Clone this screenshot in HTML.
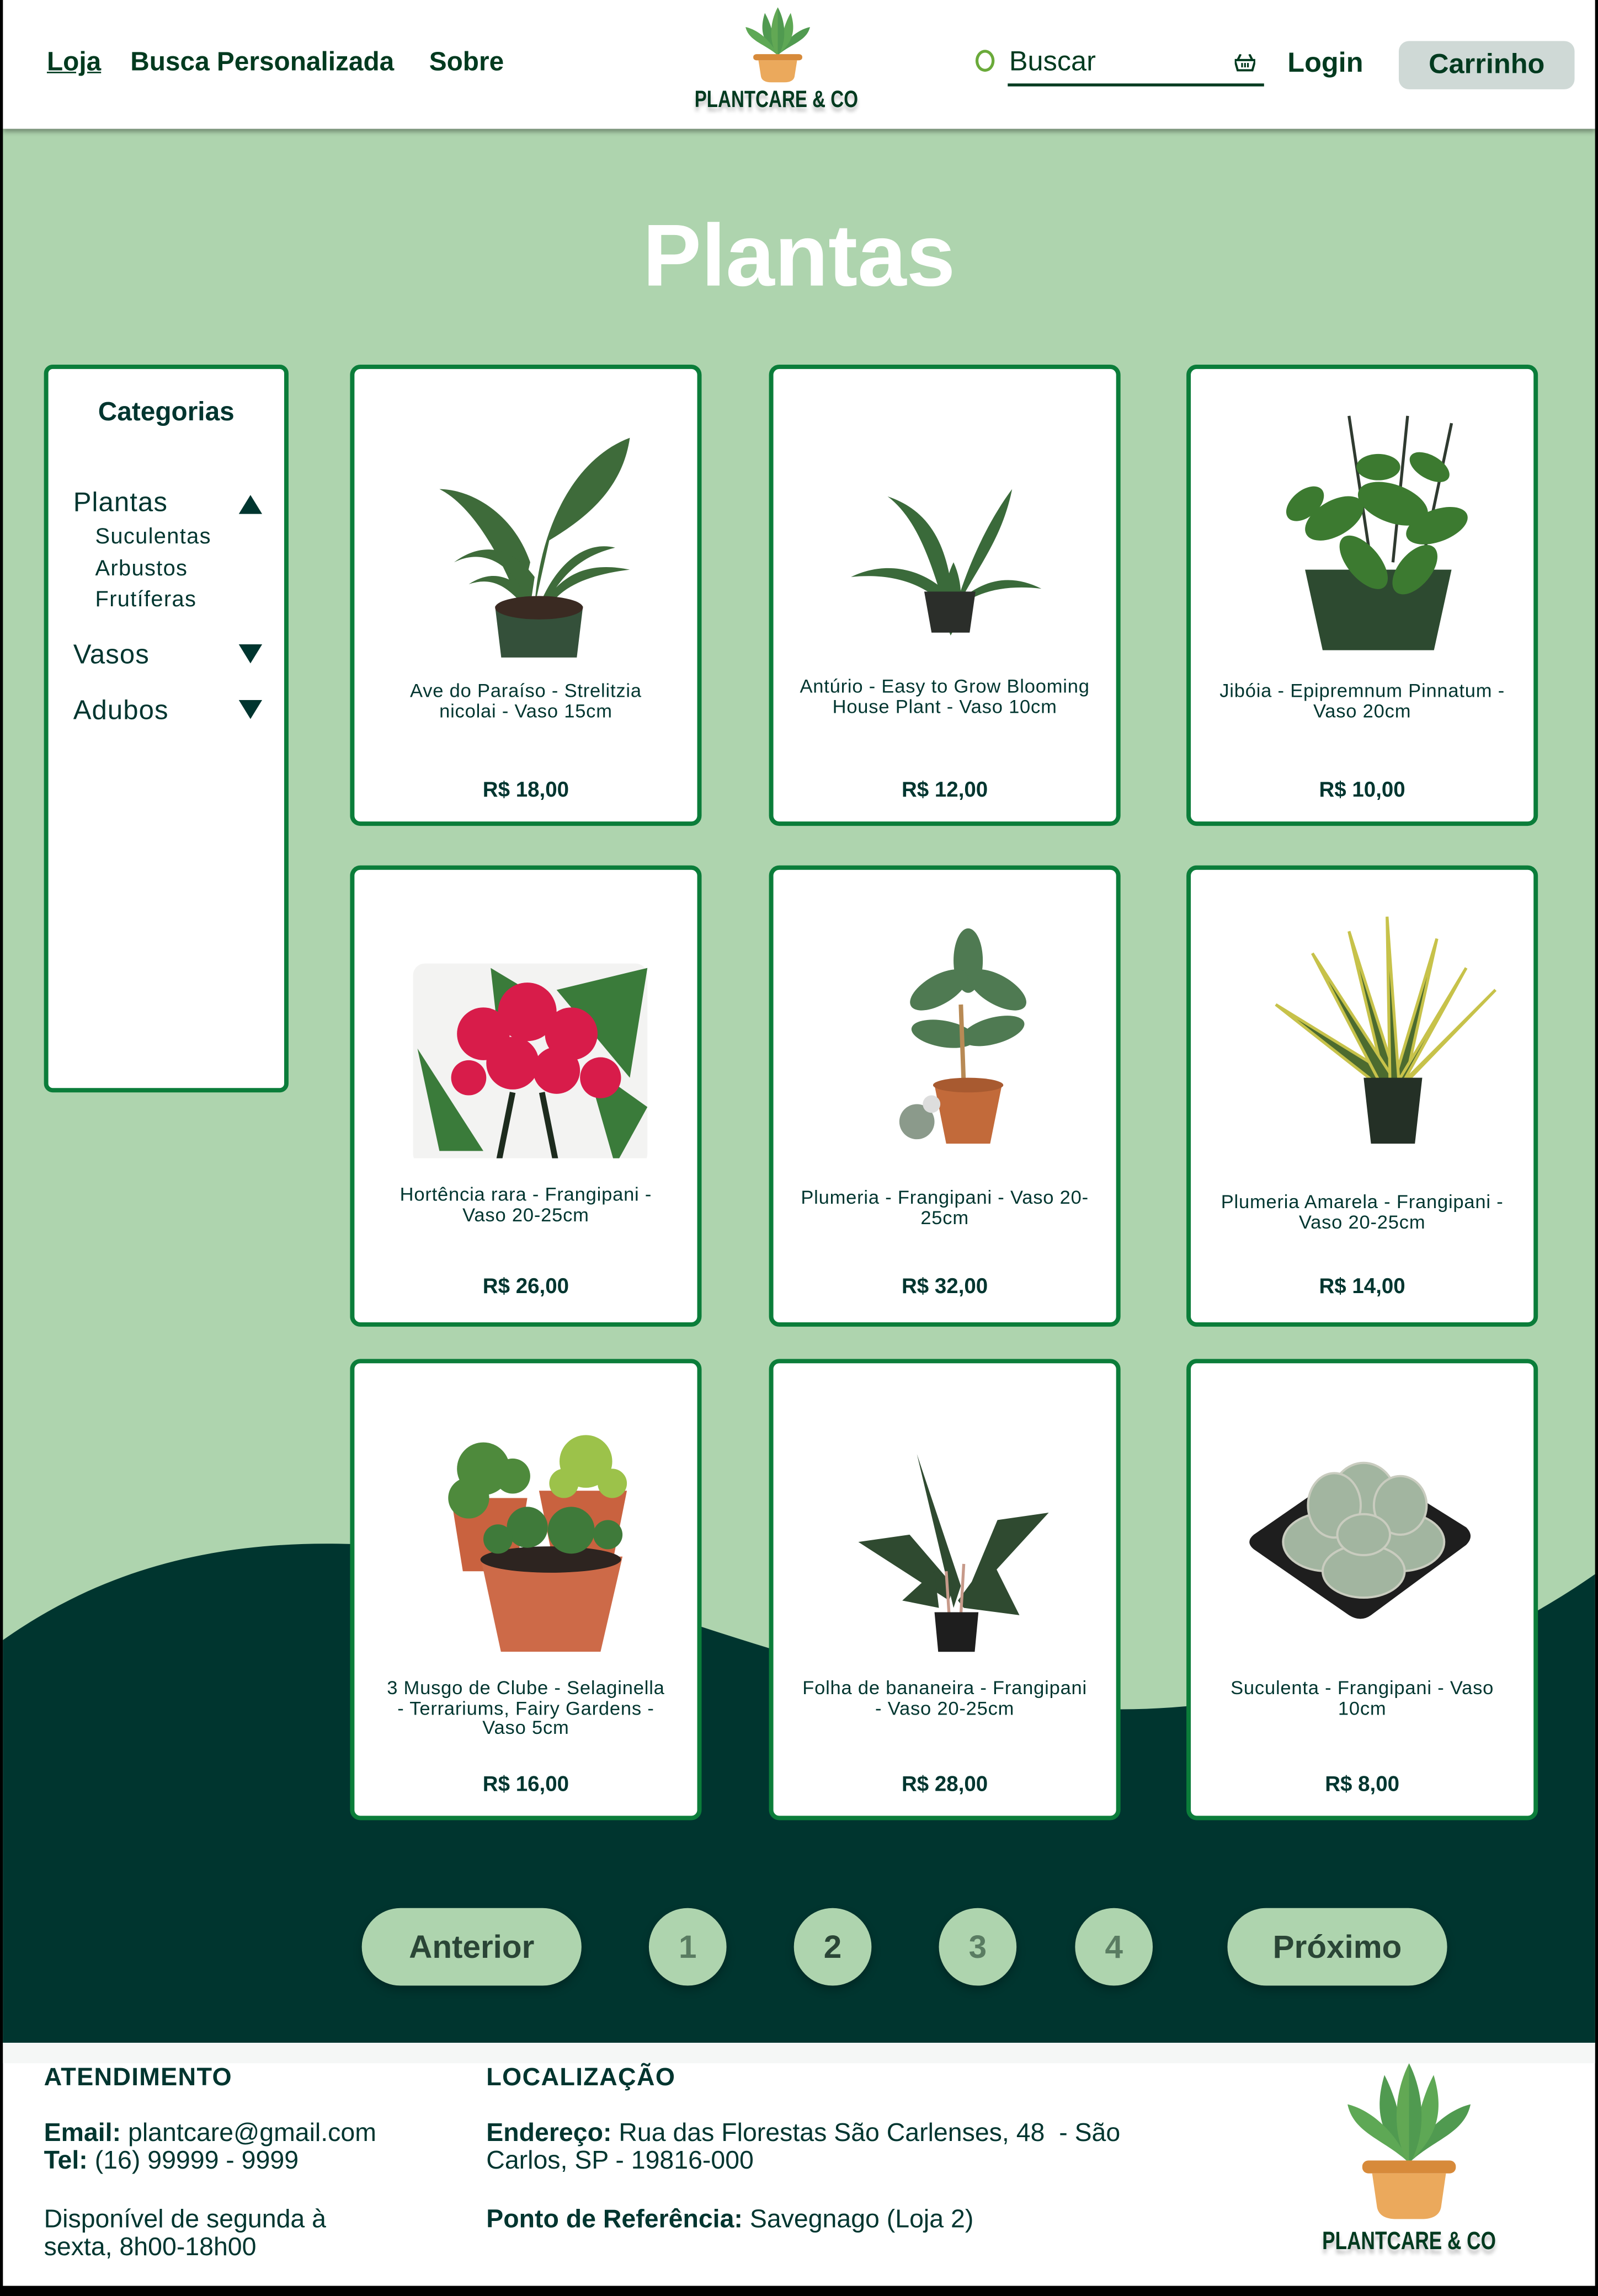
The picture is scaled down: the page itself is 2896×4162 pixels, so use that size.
<!DOCTYPE html>
<html><head><meta charset="utf-8">
<style>
html,body{margin:0;padding:0;background:#000;}
body{width:2896px;height:4162px;overflow:hidden;position:relative;}
#w{position:absolute;left:0;top:0;width:1091px;height:1568px;transform:scale(2.65445);transform-origin:0 0;font-family:"Liberation Sans",sans-serif;color:#00352f;overflow:hidden;background:#000;}
.abs{position:absolute;}
#hdr{left:2px;top:0;width:1087px;height:88px;background:#fff;box-shadow:0 2px 3px rgba(0,0,0,.35);z-index:3;}
.nav{position:absolute;top:32px;font-size:18px;font-weight:bold;color:#003a1f;}
#main{left:2px;top:88px;width:1087px;height:1308px;background:#aed4ae;}
.card{position:absolute;width:240px;height:315px;background:#fff;border:3px solid #0b7d3a;border-radius:7px;box-sizing:border-box;}
.card svg{position:absolute;left:38px;top:22px;}
.card .t{position:absolute;left:18px;right:18px;text-align:center;font-size:13px;line-height:13.5px;letter-spacing:.3px;color:#00352f;}
.card .p{position:absolute;left:0;right:0;top:280px;text-align:center;font-size:14.5px;font-weight:bold;color:#00352f;}
.pg{position:absolute;top:1303px;height:53px;background:#aed4ae;border-radius:27px;text-align:center;line-height:53px;font-size:22px;font-weight:bold;color:#2a4536;box-shadow:0 3px 6px rgba(0,0,0,.25);}
#foot{left:2px;top:1395px;width:1087px;height:166px;background:#fff;}
.fh{position:absolute;font-size:17px;font-weight:bold;letter-spacing:.5px;}
.ft{position:absolute;font-size:17.5px;line-height:19px;}
.logo{font-family:"Liberation Sans Narrow","Liberation Sans",sans-serif;font-weight:bold;color:#003a1f;text-shadow:0 3px 3px rgba(0,0,0,.25);white-space:nowrap;transform-origin:50% 50%;}
</style></head><body><div id="w">
<div class="abs" id="main"></div>
<svg class="abs" style="left:0;top:0" width="1091" height="1568"><path d="M2 1120 C80 1065 170 1045 290 1058 C420 1075 600 1180 800 1166 C930 1156 1010 1130 1089 1075 L1089 1396 L2 1396Z" fill="#00352f"/></svg>
<div class="abs" id="hdr">
<div class="nav" style="left:30px;text-decoration:underline;">Loja</div>
<div class="nav" style="left:87px">Busca Personalizada</div>
<div class="nav" style="left:291px">Sobre</div>
<svg class="abs" style="left:507px;top:5px" width="44" height="52" viewBox="0 -5 100 135" preserveAspectRatio="none">
<path d="M50 80 C30 60 20 40 30 5 C40 25 45 50 50 80Z" fill="#509a50"/>
<path d="M50 80 C30 60 5 55 0 30 C20 35 40 55 50 80Z" fill="#5ea855"/>
<path d="M50 80 C70 60 95 55 100 30 C80 35 60 55 50 80Z" fill="#509a50"/>
<path d="M50 80 C70 60 80 40 70 5 C60 25 55 50 50 80Z" fill="#5ea855"/>
<path d="M50 82 C35 55 38 20 50 -5 C62 20 65 55 50 82Z" fill="#62a854"/>
<path d="M50 82 L50 -5 C62 20 65 55 50 82Z" fill="#509a50"/>
<rect x="12" y="78" width="76" height="11" rx="5" fill="#d78a3a"/>
<path d="M20 89 L80 89 L76 118 Q74 128 60 128 L40 128 Q26 128 24 118Z" fill="#eba95c"/>
</svg>
<div class="abs logo" style="left:428px;top:60px;width:200px;text-align:center;font-size:16px;transform:scaleX(.78)">PLANTCARE &amp; CO</div>
<div class="abs" style="left:664px;top:34px;width:13px;height:15px;border:2px solid #6aaa3a;border-radius:50%;box-sizing:border-box"></div>
<div class="abs" style="left:687px;top:32px;font-size:19px;color:#003a1f">Buscar</div>
<div class="abs" style="left:686px;top:57px;width:175px;height:2px;background:#003a1f"></div>
<svg class="abs" style="left:841px;top:37px" width="14" height="12" viewBox="0 0 14 12"><path d="M4 0 L2 4 M10 0 L12 4" stroke="#003a1f" stroke-width="1.5"/><path d="M0 4 H14 L12 11 H2Z" fill="none" stroke="#003a1f" stroke-width="1.5"/><path d="M5 6v3M7 6v3M9 6v3" stroke="#003a1f" stroke-width="1.2"/></svg>
<div class="nav" style="left:877px;top:33px;font-size:19px">Login</div>
<div class="abs" style="left:953px;top:28px;width:120px;height:33px;background:#cfd9d6;border-radius:7px;text-align:center;line-height:33px;font-size:19px;font-weight:bold;color:#003a1f">Carrinho</div>
</div>
<div class="abs" style="left:0;width:1091px;top:140px;text-align:center;font-size:60px;font-weight:bold;color:#fff;">Plantas</div>
<div class="abs" style="left:30px;top:249px;width:167px;height:497px;background:#fff;border:3px solid #0b7d3a;border-radius:6px;box-sizing:border-box">
<div class="abs" style="left:0;right:0;top:19px;text-align:center;font-size:18px;font-weight:bold">Categorias</div>
<div class="abs" style="left:17px;top:80px;font-size:18.5px;letter-spacing:.4px">Plantas</div>
<div class="abs" style="left:32px;top:104px;font-size:15px;line-height:21.5px;letter-spacing:.5px">Suculentas<br>Arbustos<br>Frutíferas</div>
<div class="abs" style="left:17px;top:184px;font-size:18.5px;letter-spacing:.4px">Vasos</div>
<div class="abs" style="left:17px;top:222px;font-size:18.5px;letter-spacing:.4px">Adubos</div>
<svg class="abs" style="left:130px;top:86px" width="16" height="13"><path d="M0 13 L8 0 L16 13Z" fill="#00352f"/></svg>
<svg class="abs" style="left:130px;top:188px" width="16" height="13"><path d="M0 0 L8 13 L16 0Z" fill="#00352f"/></svg>
<svg class="abs" style="left:130px;top:226px" width="16" height="13"><path d="M0 0 L8 13 L16 0Z" fill="#00352f"/></svg>
</div>

<!-- Row 1 -->
<div class="card" style="left:239px;top:249px">
<svg width="160" height="175" viewBox="0 0 160 175"><g fill="#3e6b3a"><path d="M85 140 C88 90 110 40 150 25 C145 60 120 80 95 95Z"/><path d="M75 140 C60 100 40 70 20 60 C40 60 70 75 82 110Z"/><path d="M82 140 C70 110 50 100 30 110 C50 95 70 100 85 120Z"/><path d="M88 140 C100 110 120 95 140 100 C120 105 105 115 92 140Z"/><path d="M90 140 C105 115 125 110 150 115 C125 118 105 125 95 140Z"/><path d="M78 140 C65 125 55 120 40 125 C55 115 70 118 82 135Z"/></g><path d="M58 140 H118 L112 190 H64Z" fill="#34503a"/><ellipse cx="88" cy="141" rx="30" ry="8" fill="#3a2a22"/></svg>
<div class="t" style="top:213px">Ave do Paraíso - Strelitzia nicolai - Vaso 15cm</div><div class="p">R$ 18,00</div></div>
<div class="card" style="left:525px;top:249px">
<svg width="160" height="175" viewBox="0 0 160 175"><g fill="#3a6a3a"><path d="M80 145 C70 110 60 80 40 65 C70 75 82 100 85 140Z"/><path d="M85 145 C95 110 110 80 125 60 C118 95 100 115 88 140Z"/><path d="M80 140 C60 120 35 118 15 120 C40 108 65 115 82 132Z"/><path d="M85 140 C105 120 125 118 145 128 C120 125 100 130 87 142Z"/><path d="M83 160 C75 140 80 120 85 110 C92 125 92 145 83 160Z"/></g><path d="M65 130 H100 L96 158 H70Z" fill="#2b2e2a"/></svg>
<div class="t" style="top:210px">Antúrio - Easy to Grow Blooming House Plant - Vaso 10cm</div><div class="p">R$ 12,00</div></div>
<div class="card" style="left:810px;top:249px">
<svg width="160" height="175" viewBox="0 0 160 175"><path d="M70 10 L85 110 M110 10 L100 110 M140 15 L120 110" stroke="#2f3a30" stroke-width="2"/><path d="M40 115 H140 L128 170 H52Z" fill="#2d4a30"/><g fill="#3c7a30"><ellipse cx="60" cy="80" rx="22" ry="12" transform="rotate(-30 60 80)"/><ellipse cx="100" cy="70" rx="25" ry="13" transform="rotate(20 100 70)"/><ellipse cx="130" cy="85" rx="22" ry="11" transform="rotate(-20 130 85)"/><ellipse cx="80" cy="110" rx="22" ry="11" transform="rotate(50 80 110)"/><ellipse cx="115" cy="115" rx="20" ry="11" transform="rotate(-50 115 115)"/><ellipse cx="40" cy="70" rx="15" ry="9" transform="rotate(-40 40 70)"/><ellipse cx="90" cy="45" rx="15" ry="9"/><ellipse cx="125" cy="45" rx="15" ry="8" transform="rotate(30 125 45)"/></g></svg>
<div class="t" style="top:213px">Jibóia - Epipremnum Pinnatum - Vaso 20cm</div><div class="p">R$ 10,00</div></div>

<!-- Row 2 -->
<div class="card" style="left:239px;top:591px">
<svg width="165" height="175" viewBox="0 0 165 175"><rect x="2" y="42" width="160" height="138" rx="8" fill="#f3f3f2"/><g fill="#3a7b3a"><path d="M5 100 L50 170 L20 170Z"/><path d="M100 60 L162 45 L150 120Z"/><path d="M55 45 L80 60 L60 90Z"/><path d="M120 110 L162 140 L140 180Z"/></g><g fill="#d81c4a"><circle cx="50" cy="90" r="18"/><circle cx="80" cy="75" r="20"/><circle cx="110" cy="90" r="18"/><circle cx="70" cy="110" r="18"/><circle cx="100" cy="115" r="16"/><circle cx="130" cy="120" r="14"/><circle cx="40" cy="120" r="12"/></g><path d="M70 130 L60 180 M90 130 L100 180" stroke="#1d2b1e" stroke-width="4"/></svg>
<div class="t" style="top:215px">Hortência rara - Frangipani - Vaso 20-25cm</div><div class="p" style="top:277px">R$ 26,00</div></div>
<div class="card" style="left:525px;top:591px">
<svg width="160" height="175" viewBox="0 0 160 175"><g fill="#4f7a52"><ellipse cx="95" cy="40" rx="10" ry="22"/><ellipse cx="75" cy="60" rx="22" ry="10" transform="rotate(-30 75 60)"/><ellipse cx="115" cy="60" rx="22" ry="10" transform="rotate(30 115 60)"/><ellipse cx="78" cy="90" rx="22" ry="9" transform="rotate(10 78 90)"/><ellipse cx="112" cy="88" rx="22" ry="9" transform="rotate(-15 112 88)"/></g><path d="M90 70 L92 125" stroke="#b88a55" stroke-width="3"/><path d="M72 125 H118 L110 165 H80Z" fill="#c26a3a"/><ellipse cx="95" cy="125" rx="24" ry="5" fill="#a85a30"/><circle cx="60" cy="150" r="12" fill="#8b9a8b"/><circle cx="70" cy="138" r="6" fill="#ddd"/></svg>
<div class="t" style="top:217px">Plumeria - Frangipani - Vaso 20-25cm</div><div class="p" style="top:277px">R$ 32,00</div></div>
<div class="card" style="left:810px;top:591px">
<svg width="180" height="175" viewBox="0 0 180 175"><g fill="#4c6b2f" stroke="#c7c24a" stroke-width="2"><path d="M95 125 L70 20 L102 120Z"/><path d="M100 125 L130 25 L108 125Z"/><path d="M90 125 L20 70 L98 118Z"/><path d="M105 125 L170 60 L110 122Z"/><path d="M92 125 L45 35 L100 120Z"/><path d="M102 125 L150 45 L107 123Z"/><path d="M98 125 L96 10 L104 122Z"/></g><path d="M80 120 H120 L115 165 H85Z" fill="#243026"/></svg>
<div class="t" style="top:220px">Plumeria Amarela - Frangipani - Vaso 20-25cm</div><div class="p" style="top:277px">R$ 14,00</div></div>

<!-- Row 3 -->
<div class="card" style="left:239px;top:928px">
<svg width="160" height="175" viewBox="0 0 160 175"><path d="M28 70 H80 L72 120 H36Z" fill="#c9623f"/><path d="M88 65 H148 L138 115 H98Z" fill="#c9623f"/><path d="M48 110 H145 L130 175 H62Z" fill="#cd6a48"/><ellipse cx="96" cy="112" rx="48" ry="9" fill="#2d2420"/><g fill="#4e8a3c"><circle cx="50" cy="50" r="18"/><circle cx="40" cy="70" r="14"/><circle cx="70" cy="55" r="12"/></g><g fill="#9cc24a"><circle cx="120" cy="45" r="18"/><circle cx="105" cy="60" r="10"/><circle cx="138" cy="60" r="10"/></g><g fill="#3f7a3a"><circle cx="80" cy="90" r="14"/><circle cx="110" cy="92" r="16"/><circle cx="135" cy="95" r="10"/><circle cx="60" cy="98" r="10"/></g></svg>
<div class="t" style="top:215px">3 Musgo de Clube - Selaginella - Terrariums, Fairy Gardens -Vaso 5cm</div><div class="p">R$ 16,00</div></div>
<div class="card" style="left:525px;top:928px">
<svg width="160" height="175" viewBox="0 0 160 175"><g fill="#2f4a30"><path d="M85 145 L60 40 L90 130Z"/><path d="M90 145 L115 85 L150 80 L95 140Z"/><path d="M82 140 L20 100 L55 95 L85 130Z"/><path d="M88 140 L110 110 L130 150 L92 145Z"/><path d="M75 145 L50 140 L72 120Z"/></g><path d="M80 120 L82 150 M92 115 L90 150" stroke="#c79a8a" stroke-width="2"/><path d="M72 148 H102 L99 180 H75Z" fill="#1e1e1e"/></svg>
<div class="t" style="top:215px">Folha de bananeira - Frangipani - Vaso 20-25cm</div><div class="p">R$ 28,00</div></div>
<div class="card" style="left:810px;top:928px">
<svg width="170" height="175" viewBox="0 0 170 175"><path d="M5 95 L70 50 Q78 46 86 50 L150 90 Q156 96 150 102 L85 150 Q78 155 70 150 L5 105 Q-1 100 5 95Z" fill="#1e1e1e"/><g fill="#a2b5a0" stroke="#c9ccbf" stroke-width="1.5"><ellipse cx="55" cy="100" rx="30" ry="20"/><ellipse cx="105" cy="100" rx="30" ry="20"/><ellipse cx="80" cy="70" rx="22" ry="24"/><ellipse cx="60" cy="75" rx="18" ry="22"/><ellipse cx="105" cy="75" rx="18" ry="20"/><ellipse cx="80" cy="120" rx="28" ry="18"/><ellipse cx="80" cy="95" rx="18" ry="14"/></g></svg>
<div class="t" style="top:215px">Suculenta - Frangipani - Vaso 10cm</div><div class="p">R$ 8,00</div></div>

<div class="pg" style="left:247px;width:150px">Anterior</div>
<div class="pg" style="left:443px;width:53px;color:#5a7c62">1</div>
<div class="pg" style="left:542px;width:53px">2</div>
<div class="pg" style="left:641px;width:53px;color:#5a7c62">3</div>
<div class="pg" style="left:734px;width:53px;color:#5a7c62">4</div>
<div class="pg" style="left:838px;width:150px">Próximo</div>

<div class="abs" id="foot">
<div class="abs" style="left:0;top:0;width:1087px;height:14px;background:#f5f7f6"></div>
<div class="fh" style="left:28px;top:14px">ATENDIMENTO</div>
<div class="ft" style="left:28px;top:52px"><b>Email:</b> plantcare@gmail.com<br><b>Tel:</b> (16) 99999 - 9999</div>
<div class="ft" style="left:28px;top:111px">Disponível de segunda à<br>sexta, 8h00-18h00</div>
<div class="fh" style="left:330px;top:14px">LOCALIZAÇÃO</div>
<div class="ft" style="left:330px;top:52px"><b>Endereço:</b> Rua das Florestas São Carlenses, 48 &nbsp;- São<br>Carlos, SP - 19816-000</div>
<div class="ft" style="left:330px;top:111px"><b>Ponto de Referência:</b> Savegnago (Loja 2)</div>
<svg class="abs" style="left:918px;top:14px" width="84" height="108" viewBox="0 -5 100 135" preserveAspectRatio="none">
<path d="M50 80 C30 60 20 40 30 5 C40 25 45 50 50 80Z" fill="#509a50"/>
<path d="M50 80 C30 60 5 55 0 30 C20 35 40 55 50 80Z" fill="#5ea855"/>
<path d="M50 80 C70 60 95 55 100 30 C80 35 60 55 50 80Z" fill="#509a50"/>
<path d="M50 80 C70 60 80 40 70 5 C60 25 55 50 50 80Z" fill="#5ea855"/>
<path d="M50 82 C35 55 38 20 50 -5 C62 20 65 55 50 82Z" fill="#62a854"/>
<path d="M50 82 L50 -5 C62 20 65 55 50 82Z" fill="#509a50"/>
<rect x="12" y="78" width="76" height="11" rx="5" fill="#d78a3a"/>
<path d="M20 89 L80 89 L76 118 Q74 128 60 128 L40 128 Q26 128 24 118Z" fill="#eba95c"/>
</svg>
<div class="abs logo" style="left:860px;top:126px;width:200px;text-align:center;font-size:17px;transform:scaleX(.78)">PLANTCARE &amp; CO</div>
</div>
</div></body></html>
